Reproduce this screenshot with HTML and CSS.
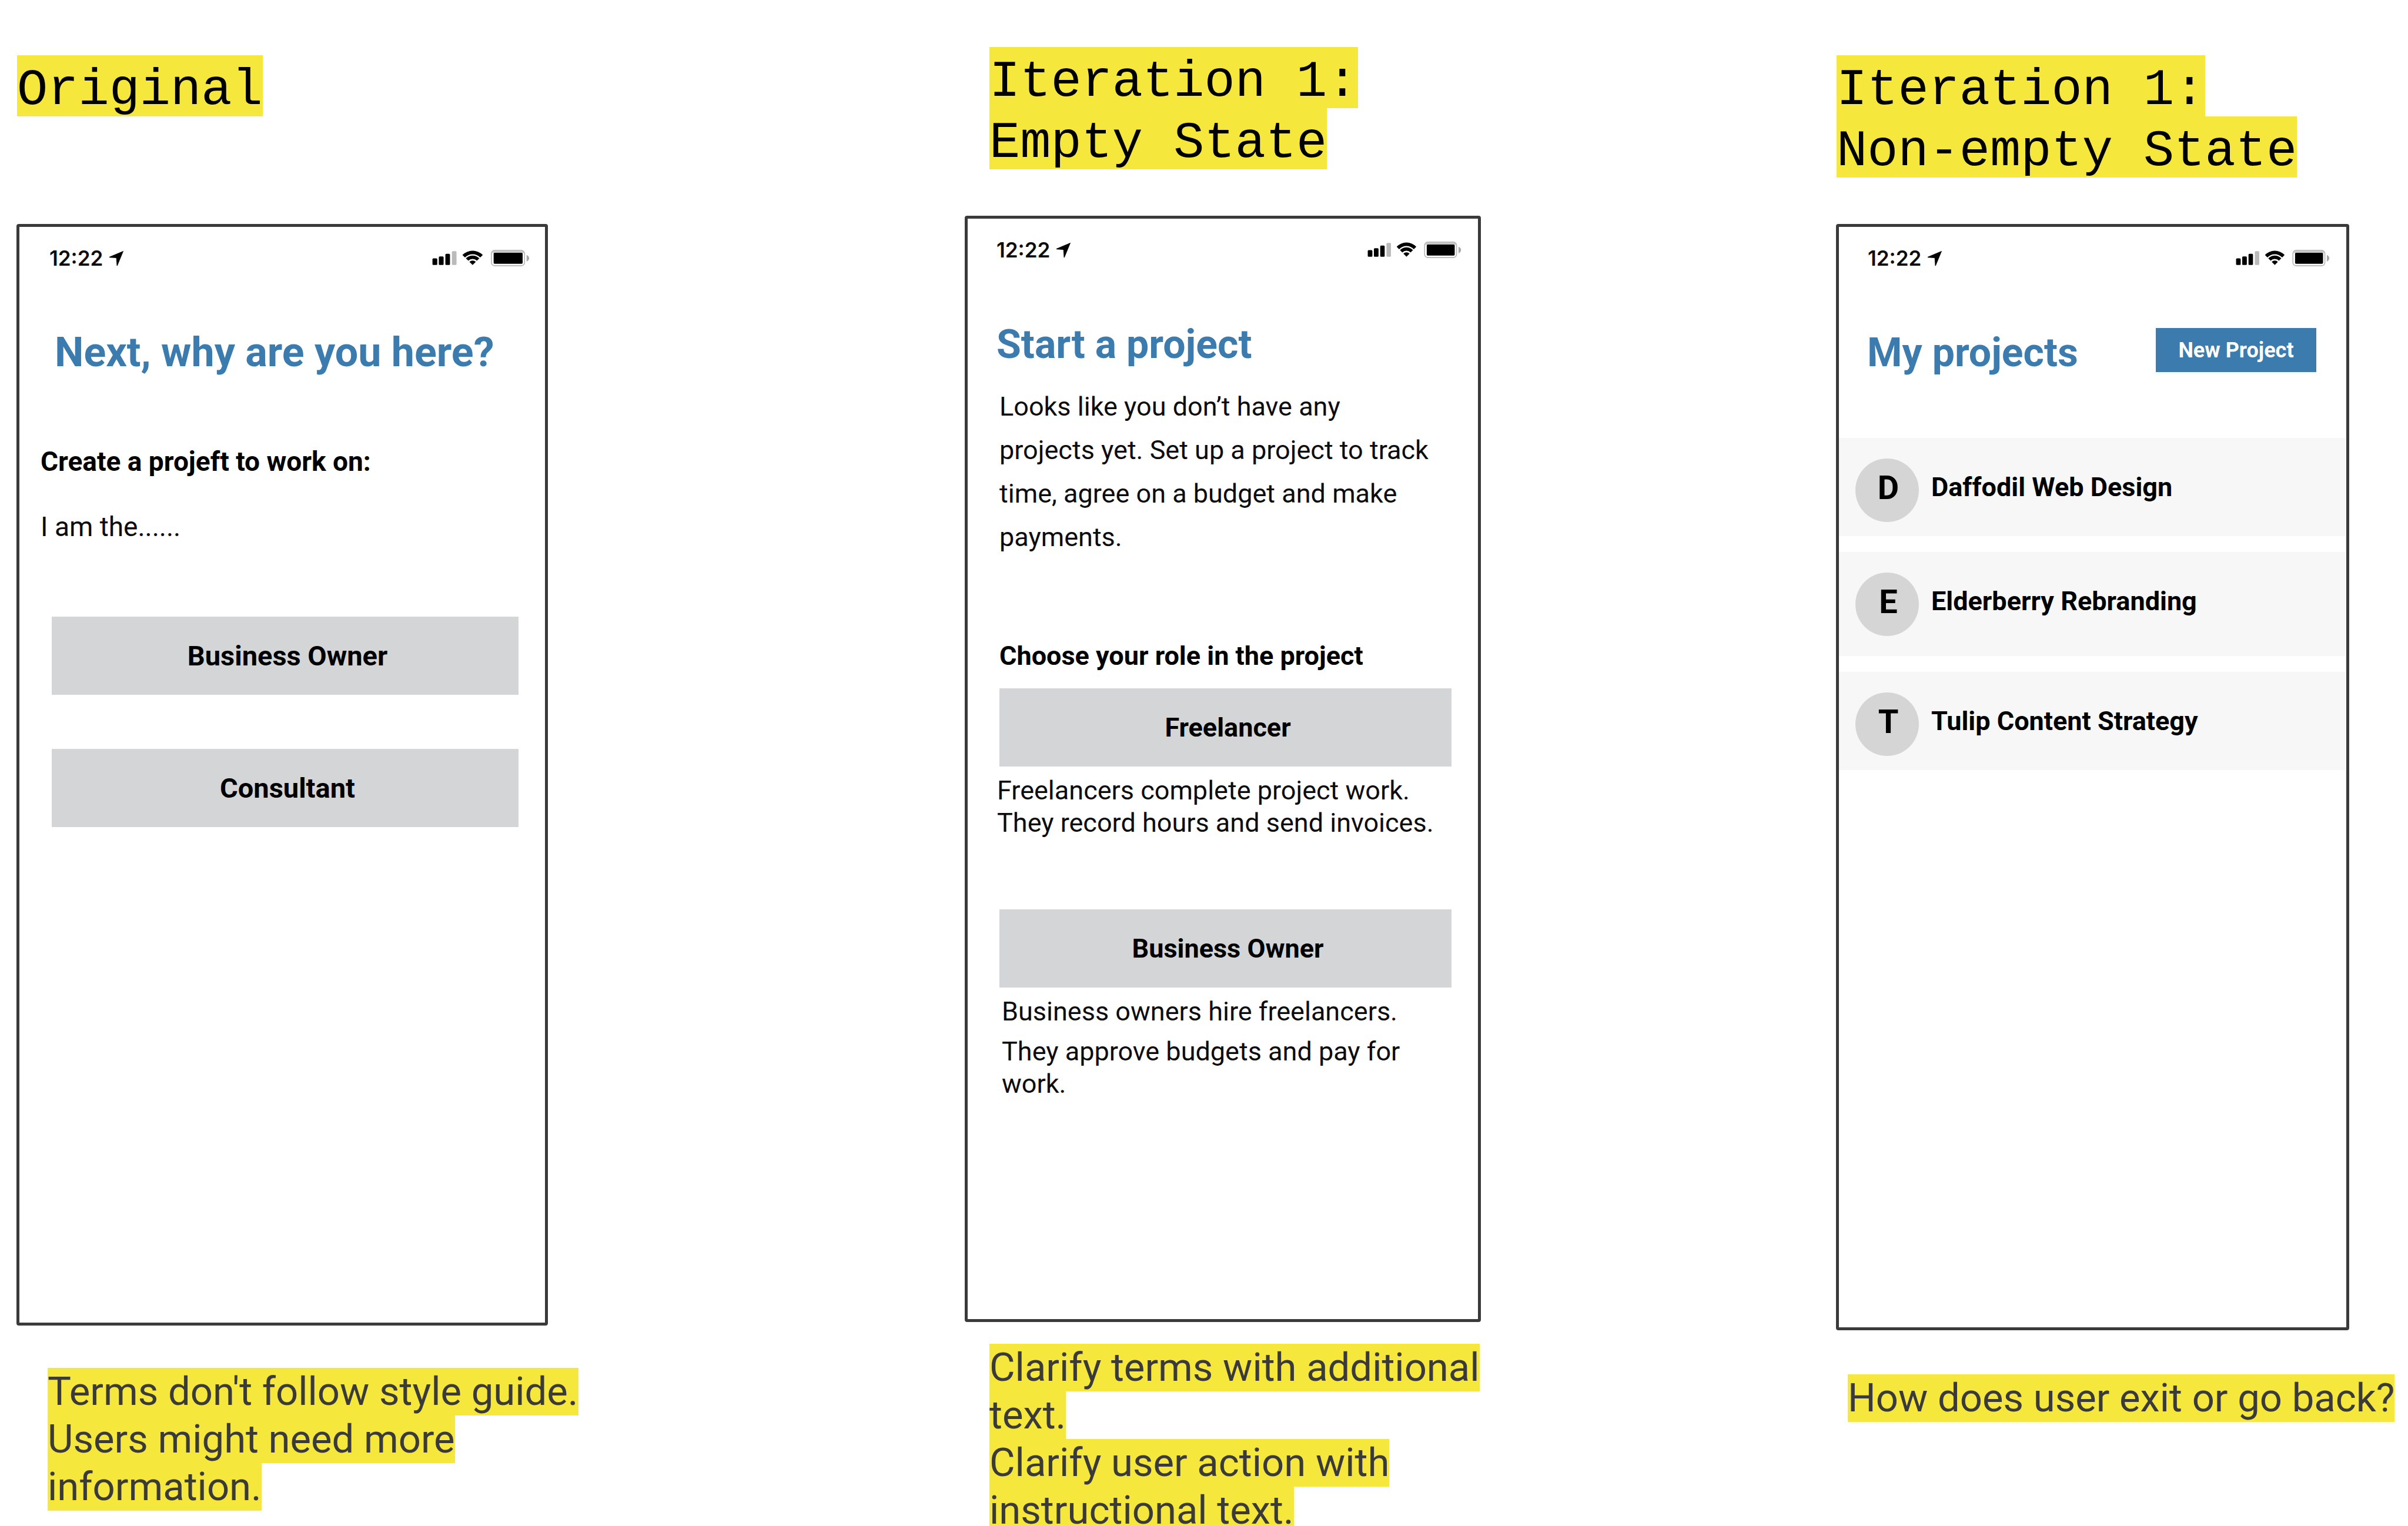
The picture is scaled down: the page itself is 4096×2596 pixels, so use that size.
FILE: index.html
```html
<!DOCTYPE html>
<html lang="en">
<head>
<meta charset="utf-8">
<title>Project onboarding iterations</title>
<link rel="stylesheet" href="styles.css">
</head>
<body>
<svg class="sprite" aria-hidden="true">
  <symbol id="arrow" viewBox="460 94 96 98">
    <path d="M553 96 463 134 Q462 137 466 138 L507 141 510 188 Q512 192 515 188Z"/>
  </symbol>
  <symbol id="indicators" viewBox="105 85 620 112" preserveAspectRatio="none">
    <rect x="111" y="143" width="30" height="42" rx="6"/>
    <rect x="151" y="131" width="30" height="54" rx="6"/>
    <rect x="192" y="114" width="29" height="71" rx="6"/>
    <rect x="233" y="97" width="29" height="88" rx="6" fill="#bababa"/>
    <path d="M299 121.400A90 90 0 0 1 427 121.400L411 137A68 68 0 0 0 315 137Z"/>
    <path d="M320.600 142.600A60 60 0 0 1 405.400 142.600L389.900 158.100A38 38 0 0 0 336.100 158.100Z"/>
    <path d="M363 185 343 165A28 28 0 0 1 383 165Z"/>
    <rect x="481" y="92" width="208" height="98" rx="20" fill="#fff" stroke="#b4b4b4" stroke-width="6"/>
    <path d="M486 112Q486 94 502 94H668Q686 94 686 112L676 106H496Z" fill="#c6c6c6"/>
    <rect x="495" y="107" width="182" height="70" rx="6"/>
    <path d="M702 121Q718 128 718 142T702 163Z" fill="#a8a8a8"/>
  </symbol>
</svg>
<main class="board">

  <section class="column column--original">
    <h1 class="heading"><mark>Original</mark></h1>
    <div class="phone phone--original">
      <div class="status">
        <span class="status__time">12:22</span>
        <svg class="status__arrow"><use href="#arrow"/></svg>
        <svg class="status__icons"><use href="#indicators"/></svg>
      </div>
      <h2 class="title">Next, why are you here?</h2>
      <p class="label">Create a projeft to work on:</p>
      <p class="text">I am the......</p>
      <div class="choices">
        <button class="choice" type="button">Business Owner</button>
        <button class="choice" type="button">Consultant</button>
      </div>
    </div>
    <p class="note"><mark>Terms don't follow style guide.</mark><mark>Users might need more</mark><mark>information.</mark></p>
  </section>

  <section class="column column--empty">
    <h1 class="heading"><mark>Iteration 1:</mark><mark>Empty State</mark></h1>
    <div class="phone phone--empty">
      <div class="status">
        <span class="status__time">12:22</span>
        <svg class="status__arrow"><use href="#arrow"/></svg>
        <svg class="status__icons"><use href="#indicators"/></svg>
      </div>
      <h2 class="title">Start a project</h2>
      <p class="intro">Looks like you don’t have any projects yet. Set up a project to track time, agree on a budget and make payments.</p>
      <p class="label">Choose your role in the project</p>
      <div class="role">
        <button class="choice" type="button">Freelancer</button>
        <p class="role__text">Freelancers complete project work.<br>They record hours and send invoices.</p>
      </div>
      <div class="role role--owner">
        <button class="choice" type="button">Business Owner</button>
        <p class="role__text">Business owners hire freelancers.</p>
        <p class="role__text">They approve budgets and pay for work.</p>
      </div>
    </div>
    <p class="note"><mark>Clarify terms with additional</mark><mark>text.</mark><mark>Clarify user action with</mark><mark>instructional text.</mark></p>
  </section>

  <section class="column column--list">
    <h1 class="heading"><mark>Iteration 1:</mark><mark>Non-empty State</mark></h1>
    <div class="phone phone--list">
      <div class="status">
        <span class="status__time">12:22</span>
        <svg class="status__arrow"><use href="#arrow"/></svg>
        <svg class="status__icons"><use href="#indicators"/></svg>
      </div>
      <div class="toolbar">
        <h2 class="title">My projects</h2>
        <button class="new" type="button">New Project</button>
      </div>
      <ul class="projects">
        <li class="project"><span class="project__badge">D</span><span class="project__name">Daffodil Web Design</span></li>
        <li class="project project--tall"><span class="project__badge">E</span><span class="project__name">Elderberry Rebranding</span></li>
        <li class="project"><span class="project__badge">T</span><span class="project__name">Tulip Content Strategy</span></li>
      </ul>
    </div>
    <p class="note"><mark>How does user exit or go back?</mark></p>
  </section>

</main>
</body>
</html>
```
FILE: styles.css
```css
* { box-sizing: border-box; margin: 0; padding: 0; }

body {
  height: 100vh;
  overflow: hidden;
  background: #fff;
  color: #0c0c0c;
  font-family: Roboto, "Liberation Sans", sans-serif;
}

.sprite { display: none; }

.board {
  display: grid;
  grid-template-columns:
    minmax(0, 904fr) minmax(0, 709fr) minmax(0, 878fr)
    minmax(0, 604fr) minmax(0, 873fr) minmax(0, 100fr);
  align-items: start;
  padding-left: 28px;
}

.column { padding-top: 94px; }
.column--original { grid-column: 1; }
.column--empty { grid-column: 3; padding-top: 80px; }
.column--list { grid-column: 5; }

/* Highlighted captions above and below each screen */
mark {
  display: block;
  width: fit-content;
  background: #f5e73b;
  color: inherit;
  white-space: nowrap;
}

.heading {
  min-height: 287px;
  color: #000;
  font: 400 87px/88px "Liberation Mono", "Courier New", monospace;
}
.heading mark { padding-top: 16px; }
.column--original .heading { padding-left: 1px; }
.column--empty .heading { padding-left: 42px; }
.column--list .heading { padding-left: 1px; }

.note {
  color: #3a3a3a;
  font-size: 67px;
  line-height: 81px;
}
.column--original .note { padding: 72px 0 0 53px; }
.column--empty .note { padding: 37px 0 0 42px; }
.column--list .note { padding: 75px 0 0 20px; }

/* Phone frame */
.phone {
  border: 5px solid #3a3a3a;
  border-radius: 4px;
  background: #fff;
  aspect-ratio: 878 / 1882;
}
.phone--original { aspect-ratio: 904 / 1874; }
.phone--list { aspect-ratio: 873 / 1882; }

.status {
  display: flex;
  align-items: center;
  height: 68px;
  padding: 38px 27px 0 49px;
}
.status__time {
  font: 600 35px/30px Inter, "Liberation Sans", sans-serif;
}
.status__arrow { width: 26px; height: 27px; margin-left: 10px; }
.status__icons { width: 162px; height: 30px; margin-left: auto; }
.phone--original .status { padding: 38px 25px 0 51px; }
.phone--original .status__icons { width: 168px; }

.title {
  margin: 104px 49px 0;
  color: #3c7bae;
  font-size: 68px;
  font-weight: 700;
  line-height: 84px;
}
.label {
  color: #000;
  font-size: 45px;
  font-weight: 700;
  line-height: 56px;
}
.text { font-size: 46px; line-height: 56px; }

.choice {
  display: block;
  width: 100%;
  height: 133px;
  padding-left: 8px;
  border: 0;
  background: #d4d5d7;
  color: #000;
  font: 700 45px/56px Roboto, "Liberation Sans", sans-serif;
}

/* Original screen */
.phone--original .title { margin: 103px 0 0 60px; font-size: 70px; }
.phone--original .label { margin: 116px 0 0 36px; font-size: 46px; }
.phone--original .text { margin: 55px 0 0 36px; }
.phone--original .choice { font-size: 47px; }
.choices {
  display: grid;
  gap: 92px;
  padding: 125px 45px 0 55px;
}

/* Empty state */
.intro {
  margin: 27px 80px 0 54px;
  font-size: 45px;
  line-height: 74px;
}
.phone--empty .label { margin: 137px 0 27px 54px; }
.role { padding: 0 45px 0 54px; }
.role--owner { margin-top: 120px; }
.role__text {
  margin: 13px 0 0 -4px;
  font-size: 45px;
  line-height: 55px;
}
.role--owner .role__text { margin-left: 4px; }

/* Project list */
.toolbar {
  display: flex;
  justify-content: space-between;
  padding: 104px 51px 103px 48px;
}
.toolbar .title { margin: 0; }
.new {
  width: 273px;
  height: 75px;
  border: 0;
  background: #3c7bae;
  color: #fff;
  font: 700 36px/44px Roboto, "Liberation Sans", sans-serif;
}
.projects {
  display: grid;
  gap: 27px;
  list-style: none;
}
.project {
  display: flex;
  gap: 21px;
  padding: 35px 28px 24px;
  background: #f7f7f7;
  color: #000;
  font-weight: 700;
}
.project--tall { padding-bottom: 34px; }
.project__badge {
  display: grid;
  place-items: center;
  width: 108px;
  height: 108px;
  padding: 0 0 8px 4px;
  border-radius: 50%;
  background: #d5d5d5;
  font-size: 56px;
}
.project__name {
  padding-top: 21px;
  font-size: 45px;
  line-height: 56px;
}
```
